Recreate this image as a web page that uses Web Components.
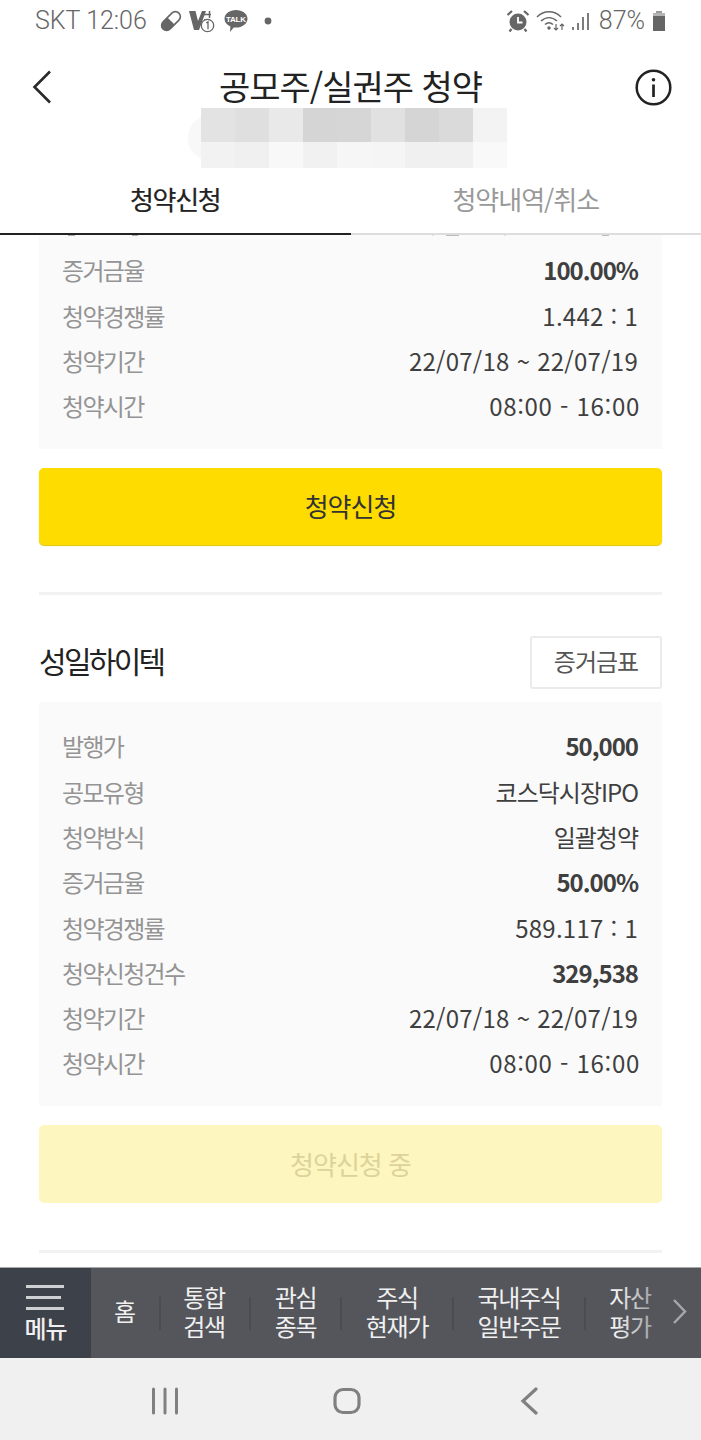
<!DOCTYPE html>
<html lang="ko">
<head>
<meta charset="utf-8">
<title>공모주/실권주 청약</title>
<style>
html,body{margin:0;padding:0;background:#fff;}
body{
    width:701px;height:1440px;overflow:hidden;
    display:flex;flex-direction:column;
    font-family:"Noto Sans CJK KR","Noto Sans",sans-serif;
}
.scroll{flex:1;min-height:0;overflow:hidden;}
.scroll-inner{padding:0 39px;display:flex;flex-direction:column;}
.num{--num:.25px;}
.time{--num:.7px;--over:-2px;}
</style>
</head>
<body>
<status-bar></status-bar>
<app-header title="공모주/실권주 청약"></app-header>
<mosaic-block></mosaic-block>
<tab-bar first="청약신청" second="청약내역/취소"></tab-bar>
<div class="scroll">
    <div class="scroll-inner">
        <ipo-card action="청약신청" clipped>
            <row-remnant></row-remnant>
            <info-row label="증거금율" value="100.00%" bold></info-row>
            <info-row class="num" label="청약경쟁률" value="1.442 : 1"></info-row>
            <info-row class="num" label="청약기간" value="22/07/18 ~ 22/07/19"></info-row>
            <info-row class="time" label="청약시간" value="08:00 - 16:00"></info-row>
        </ipo-card>
        <ipo-card name="성일하이텍" action="청약신청 중" disabled>
            <info-row label="발행가" value="50,000" bold></info-row>
            <info-row label="공모유형" value="코스닥시장IPO"></info-row>
            <info-row label="청약방식" value="일괄청약"></info-row>
            <info-row label="증거금율" value="50.00%" bold></info-row>
            <info-row class="num" label="청약경쟁률" value="589.117 : 1"></info-row>
            <info-row label="청약신청건수" value="329,538" bold></info-row>
            <info-row class="num" label="청약기간" value="22/07/18 ~ 22/07/19"></info-row>
            <info-row class="time" label="청약시간" value="08:00 - 16:00"></info-row>
        </ipo-card>
    </div>
</div>
<quick-menu></quick-menu>
<system-nav></system-nav>

<script>
// status bar
class StatusBar extends HTMLElement{
    constructor(){
        super();
        this.attachShadow({mode:"open"});
        this.shadowRoot.innerHTML = `
<style>
:host{display:flex;align-items:center;height:44px;flex:none;padding:0 35px 2px 35px;box-sizing:border-box;color:#666;font-size:25px;}
.left,.right{display:flex;align-items:center;}
.right{margin-left:auto;}
svg{display:block;flex:none;}
.talk{position:relative;width:24px;height:24px;margin-left:9px;}
.talk span{position:absolute;left:0;right:0;top:6px;text-align:center;font:bold 8px/9px "Liberation Sans",sans-serif;color:#fff;letter-spacing:-.3px;}
span.t{line-height:40px;font-family:"Roboto",sans-serif;font-weight:300;}
</style>
<div class="left">
    <span class="t">SKT 12:06</span>
    <svg width="24" height="24" viewBox="0 0 24 24" style="margin-left:12px"><g transform="rotate(-45 12 12)"><rect x="0.800" y="7" width="22.400" height="10" rx="5" fill="#fff" stroke="#666" stroke-width="1.600"/><path d="M5.800 7H12v10H5.800a5 5 0 0 1 0-10z" fill="#666"/></g></svg>
    <svg width="26" height="26" viewBox="0 0 26 26" style="margin-left:6px"><path d="M0 3h6.500l2.500 10 4-10h4L10 22H5z" fill="#666"/><path d="M15 6.500h7M20.500 3v7M15 12h5" stroke="#666" stroke-width="1.500" fill="none"/><circle cx="18.500" cy="17.500" r="6.200" fill="#fff" stroke="#666" stroke-width="1.300"/><path d="M17.300 15l1.700-1.200v7.500" stroke="#666" stroke-width="1.300" fill="none"/></svg>
    <div class="talk"><svg width="24" height="24" viewBox="0 0 24 24"><path d="M12 1c6.300 0 11.500 3.800 11.500 8.800S18.300 18.600 12 18.600c-.8 0-1.500-.1-2.300-.2L6 23l.4-5.500C2.800 16 .5 13.200.5 9.800.5 4.800 5.700 1 12 1z" fill="#666"/></svg><span>TALK</span></div>
    <svg width="8" height="8" viewBox="0 0 8 8" style="margin-left:16px"><circle cx="4" cy="4" r="3.400" fill="#666"/></svg>
</div>
<div class="right">
    <svg width="24" height="24" viewBox="0 0 24 24"><circle cx="12" cy="13" r="8.500" fill="#666"/><path d="M12 8v5.500h4.500" stroke="#fff" stroke-width="1.800" fill="none"/><path d="M1.500 6L6 2M22.500 6L18 2M5.500 20l-2 2.500M18.500 20l2 2.500" stroke="#666" stroke-width="2.200" fill="none"/></svg>
    <svg width="30" height="24" viewBox="0 0 30 24" style="margin-left:6px"><g stroke="#666" stroke-width="1.500" fill="none"><path d="M1 8c7-7 17-7 24 0"/><path d="M5 12c5-4.500 11-4.500 16 0"/><path d="M9 15.500c2.800-2.500 5.200-2.500 8 0"/></g><circle cx="13" cy="19" r="1.700" fill="#666"/><path d="M20 15v6M18 19l2 2 2-2M26 21v-6M24 17l2-2 2 2" stroke="#666" stroke-width="1.200" fill="none"/></svg>
    <svg width="20" height="24" viewBox="0 0 20 24" style="margin-left:5px"><path d="M2 18v3M7 14v7M12 8v13M17 4v17" stroke="#666" stroke-width="1.700" fill="none"/></svg>
    <span class="t" style="margin-left:8px">87%</span>
    <svg width="14" height="24" viewBox="0 0 14 24" style="margin-left:7px"><path d="M4 2h6v2H4z" fill="#9a9a9a"/><rect x="1" y="4" width="12" height="3" fill="#b5b5b5"/><rect x="1" y="7" width="12" height="15" fill="#666"/></svg>
</div>`;
    }
}
customElements.define("status-bar", StatusBar);

// title row
class AppHeader extends HTMLElement{
    constructor(){
        super();
        this.attachShadow({mode:"open"});
        this.shadowRoot.innerHTML = `
<style>
:host{display:flex;align-items:center;justify-content:space-between;height:64px;flex:none;box-sizing:border-box;padding:22px 29px 0 32px;color:#222;}
h1{margin:0;font-size:34px;font-weight:400;letter-spacing:-1px;line-height:42px;padding-bottom:2px;margin-left:14px;}
svg{display:block;}
</style>
<svg width="20" height="36" viewBox="0 0 20 36"><path d="M18 2.500L2.500 18 18 33.500" fill="none" stroke="#2a2a2a" stroke-width="2.600"/></svg>
<h1 id="t"></h1>
<svg width="37" height="37" viewBox="0 0 37 37"><circle cx="18.500" cy="18.500" r="16.800" fill="none" stroke="#222" stroke-width="2.500"/><circle cx="18.500" cy="10.800" r="1.800" fill="#222"/><path d="M18.500 15.500v12.500" stroke="#222" stroke-width="2.700"/></svg>`;
    }
    connectedCallback(){
        this.shadowRoot.querySelector("#t").textContent = this.getAttribute("title");
    }
}
customElements.define("app-header", AppHeader);

// the blurred out account strip, two rows of grey squares
class MosaicBlock extends HTMLElement{
    constructor(){
        super();
        this.attachShadow({mode:"open"});
        const top = ["#e3e3e3","#dfdfdf","#e9e9e9","#d5d5d5","#d6d6d6","#e1e1e1","#d5d5d5","#dadada","#f3f3f3"];
        const bottom = ["#f2f2f2","#f0f0f0","#f8f8f8","#f1f1f1","#f6f6f6","#f5f5f5","#f0f0f0","#f0f0f0","#f9f9f9"];
        const cell = c => `<i style="background:${c}"></i>`;
        this.shadowRoot.innerHTML = `
<style>
:host{display:flex;justify-content:center;height:60px;flex:none;position:relative;}
.grid{display:grid;grid-template-columns:repeat(9,34px);grid-template-rows:34px 26px;margin-left:7px;position:relative;}
.blob{position:absolute;left:188px;top:8px;width:40px;height:44px;border-radius:50%;background:#f8f8f8;}
</style>
<div class="blob"></div>
<div class="grid">${top.map(cell).join("")}${bottom.map(cell).join("")}</div>`;
    }
}
customElements.define("mosaic-block", MosaicBlock);

// tabs
class TabBar extends HTMLElement{
    constructor(){
        super();
        this.attachShadow({mode:"open"});
        this.shadowRoot.innerHTML = `
<style>
:host{display:grid;grid-template-columns:1fr 1fr;height:67px;flex:none;background:#fff;position:relative;z-index:1;}
div{display:flex;align-items:center;justify-content:center;box-sizing:border-box;font-size:26px;letter-spacing:-1px;padding-bottom:5px;}
.on{color:#222;border-bottom:2px solid #222;letter-spacing:-1.300px;-webkit-text-stroke:.2px #222;}
.off{color:#999;border-bottom:2px solid #ddd;}
</style>
<div class="on" id="a"></div>
<div class="off" id="b"></div>`;
    }
    connectedCallback(){
        this.shadowRoot.querySelector("#a").textContent = this.getAttribute("first");
        this.shadowRoot.querySelector("#b").textContent = this.getAttribute("second");
    }
}
customElements.define("tab-bar", TabBar);

// one block of an offering: optional name row, details, action button, divider
class IpoCard extends HTMLElement{
    constructor(){
        super();
        this.attachShadow({mode:"open"});
        this.shadowRoot.innerHTML = `
<style>
:host{display:block;}
header{display:flex;align-items:center;justify-content:space-between;height:53px;margin-bottom:13px;}
header[hidden]{display:none;}
h2{margin:0;font-size:30px;font-weight:400;color:#222;letter-spacing:-2.700px;padding-bottom:5px;}
.margin{box-sizing:border-box;width:132px;height:53px;border:2px solid #ebebeb;border-radius:3px;display:flex;align-items:center;justify-content:center;font-size:24px;color:#555;letter-spacing:-1px;padding-bottom:4px;}
.details{background:#fafafa;padding:23.350px 24px 18.300px 23px;}
:host([clipped]) .details{padding-top:0;}
.action{margin-top:19px;height:77.500px;border-radius:5px;background:#ffdc00;color:#333;display:flex;align-items:center;justify-content:center;font-size:26px;letter-spacing:-1px;box-shadow:0 1px 1px #e0c400;padding-bottom:2px;box-sizing:border-box;}
:host([disabled]) .action{height:78.500px;background:#fdf6be;color:#ddd39a;box-shadow:none;}
hr{border:0;height:3px;background:#f2f2f2;margin:46.500px 0 41px;}
</style>
<header id="h"><h2 id="n"></h2><div class="margin">증거금표</div></header>
<div class="details"><slot></slot></div>
<div class="action" id="a"></div>
<hr>`;
    }
    connectedCallback(){
        const name = this.getAttribute("name");
        if(name){
            this.shadowRoot.querySelector("#n").textContent = name;
        }else{
            this.shadowRoot.querySelector("#h").hidden = true;
        }
        this.shadowRoot.querySelector("#a").textContent = this.getAttribute("action");
    }
}
customElements.define("ipo-card", IpoCard);

// bottoms of the letters of the row that has scrolled under the tabs
class RowRemnant extends HTMLElement{
    constructor(){
        super();
        this.attachShadow({mode:"open"});
        const marks = [[6,7,"#aaa"],[70,6,"#aaa"],[370,2,"#ddd"],[384,13,"#bbb"],[442,2,"#ddd"],[540,7,"#bbb"]];
        this.shadowRoot.innerHTML = `
<style>
:host{display:block;height:14.350px;position:relative;}
i{position:absolute;top:0;height:1px;}
</style>
${marks.map(m=>`<i style="left:${m[0]}px;width:${m[1]}px;background:${m[2]}"></i>`).join("")}`;
    }
}
customElements.define("row-remnant", RowRemnant);

class InfoRow extends HTMLElement{
    constructor(){
        super();
        this.attachShadow({mode:"open"});
        this.shadowRoot.innerHTML = `
<style>
:host{display:flex;justify-content:space-between;align-items:center;box-sizing:border-box;height:45.300px;padding-bottom:4px;font-size:24px;letter-spacing:-1.700px;color:#949494;}
#v{color:#3f3f3f;letter-spacing:var(--num,-1px);margin-right:var(--over,0);}
:host([bold]) #v{font-weight:700;}
</style>
<span id="l"></span><span id="v"></span>`;
    }
    connectedCallback(){
        this.shadowRoot.querySelector("#l").textContent = this.getAttribute("label");
        this.shadowRoot.querySelector("#v").textContent = this.getAttribute("value");
    }
}
customElements.define("info-row", InfoRow);

// dark shortcut strip above the system buttons
class QuickMenu extends HTMLElement{
    constructor(){
        super();
        this.attachShadow({mode:"open"});
        const items = [["홈",""],["통합","검색"],["관심","종목"],["주식","현재가"],["국내주식","일반주문"],["자산","평가"]];
        const widths = [67,92,91,112,132,90];
        this.shadowRoot.innerHTML = `
<style>
:host{display:flex;height:91px;flex:none;background:#54565c;border-top:1px solid #a8a8a8;box-sizing:border-box;color:#f0f0f0;position:relative;overflow:hidden;}
.menu{width:91px;flex:none;background:#3d4149;display:flex;flex-direction:column;align-items:center;padding-top:17px;box-sizing:border-box;}
.menu svg{display:block;margin-left:-1px;}
.menu span{font-size:24px;line-height:30px;font-weight:500;margin-top:3px;letter-spacing:-1px;}
.items{display:flex;align-items:center;flex:1;}
.item{text-align:center;font-size:24px;line-height:29px;letter-spacing:-1.300px;position:relative;flex:none;padding-bottom:5px;}
.item+.item::before{content:"";position:absolute;left:-1px;top:50%;height:33px;margin-top:-16px;width:2px;background:#4a4c52;}
.item:nth-child(2)::before{left:1px;}
.fade{position:absolute;right:0;top:0;bottom:0;width:85px;background:linear-gradient(to right,rgba(84,86,92,0),rgba(84,86,92,.75) 65%);}
.more{position:absolute;right:14px;top:30px;display:block;}
</style>
<div class="menu">
    <svg width="40" height="25" viewBox="0 0 40 25"><path d="M1 1.500h38M1 12.500h35M1 23.500h38" stroke="#cfd0d3" stroke-width="3"/></svg>
    <span>메뉴</span>
</div>
<div class="items">${items.map((it,i)=>`<div class="item" style="width:${widths[i]}px">${it[0]}${it[1] ? "<br>"+it[1] : ""}</div>`).join("")}</div>
<div class="fade"></div>
<svg class="more" width="15" height="27" viewBox="0 0 15 27"><path d="M2 2l11 11.500L2 25" fill="none" stroke="#a5a6a9" stroke-width="2.500"/></svg>`;
    }
}
customElements.define("quick-menu", QuickMenu);

class SystemNav extends HTMLElement{
    constructor(){
        super();
        this.attachShadow({mode:"open"});
        this.shadowRoot.innerHTML = `
<style>
:host{display:grid;grid-template-columns:330px 34px 1fr;height:82px;flex:none;background:#f0f0f0;align-items:center;padding-top:4px;box-sizing:border-box;}
svg{display:block;}
</style>
<svg width="330" height="28" viewBox="0 0 330 28"><path d="M153.500 2v24M165 2v24M176.500 2v24" stroke="#808080" stroke-width="3" stroke-linecap="round"/></svg>
<svg width="28" height="28" viewBox="0 0 28 28" style="margin-left:3px"><rect x="2" y="2.500" width="24" height="23" rx="8" fill="none" stroke="#808080" stroke-width="3.200"/></svg>
<svg width="30" height="28" viewBox="0 0 30 28" style="margin-left:155px"><path d="M17 2L4 14l13 12" fill="none" stroke="#808080" stroke-width="3.200" stroke-linecap="round"/></svg>`;
    }
}
customElements.define("system-nav", SystemNav);
</script>
</body>
</html>
